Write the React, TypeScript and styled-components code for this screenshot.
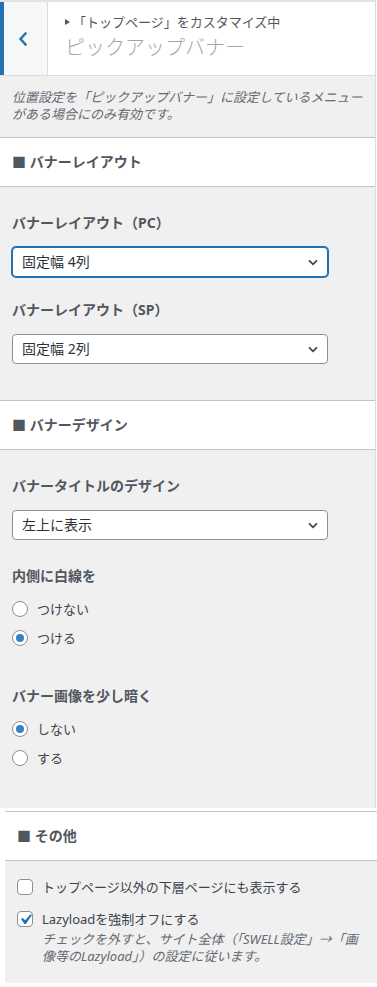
import React from "react";
import styled, { createGlobalStyle } from "styled-components";

const GlobalStyle = createGlobalStyle`
  html, body { margin: 0; padding: 0; background: #fff; }
  body {
    font-family: "Noto Sans", "Noto Sans CJK JP", sans-serif;
    color: #3c434a;
  }
  * { box-sizing: border-box; }
`;

const Page = styled.div`
  width: 377px;
`;

const Panel = styled.div`
  width: 376px;
  border-right: 1px solid #dcdcde;
  background: #f0f0f1;
`;

const Header = styled.div`
  display: flex;
  height: 76px;
  border-top: 2px solid #e2e3e4;
  border-bottom: 1px solid #dcdcde;
  background: #fff;
`;

const BackButton = styled.div`
  width: 48px;
  flex: none;
  display: flex;
  align-items: center;
  justify-content: center;
  padding-right: 5px;
  background: #f6f7f7;
  border-left: 4px solid #2271b1;
  border-right: 1px solid #dcdcde;
`;

const HeaderTitles = styled.div`
  display: flex;
  flex-direction: column;
  padding: 11px 0 0 17px;
`;

const Crumb = styled.div`
  display: flex;
  align-items: center;
  font-size: 13px;
  line-height: 18px;
  color: #50575e;
`;

const CrumbArrow = styled.span`
  width: 0;
  height: 0;
  border-left: 5px solid #50575e;
  border-top: 3px solid transparent;
  border-bottom: 3px solid transparent;
  margin-right: 3px;
`;

const Title = styled.div`
  margin-top: 3px;
  font-size: 20px;
  line-height: 28px;
  font-weight: 300;
  color: #a2a6ab;
`;

const Description = styled.p`
  margin: 0;
  padding: 13px 4px 14px 12px;
  font-size: 13px;
  line-height: 17px;
  font-style: italic;
  color: #646970;
`;

const SectionHead = styled.h3`
  margin: 0;
  height: 50px;
  display: flex;
  align-items: center;
  padding: 0 12px;
  background: #fff;
  border-top: 1px solid #c3c4c7;
  border-bottom: 1px solid #c3c4c7;
  font-size: 14px;
  line-height: 20px;
  font-weight: 700;
  color: #50575e;
`;

const SectionBody = styled.div<{ $pt: number; $pb: number }>`
  padding: ${(p) => p.$pt}px 12px ${(p) => p.$pb}px 12px;
  display: flex;
  flex-direction: column;
`;

const Control = styled.div<{ $mt?: number }>`
  display: flex;
  flex-direction: column;
  margin-top: ${(p) => p.$mt ?? 0}px;
`;

const ControlLabel = styled.div`
  font-size: 14px;
  line-height: 20px;
  font-weight: 700;
  color: #50575e;
`;

const SelectBox = styled.div<{ $focused?: boolean }>`
  margin-top: 14px;
  width: 316px;
  height: 30px;
  display: flex;
  align-items: center;
  justify-content: space-between;
  padding: 0 9px 0 9px;
  background: #fff;
  border: 1px solid ${(p) => (p.$focused ? "#2271b1" : "#8c8f94")};
  box-shadow: ${(p) => (p.$focused ? "0 0 0 1px #2271b1" : "none")};
  border-radius: 4px;
  font-size: 14px;
  line-height: 20px;
  color: #2c3338;
`;

const RadioList = styled.div`
  margin-top: 13px;
  display: flex;
  flex-direction: column;
  gap: 9px;
`;

const OptionRow = styled.label`
  display: flex;
  align-items: center;
  gap: 9px;
  height: 20px;
  font-size: 13px;
  line-height: 20px;
  color: #3c434a;
`;

const RadioCircle = styled.span<{ $checked?: boolean }>`
  width: 16px;
  height: 16px;
  flex: none;
  border-radius: 50%;
  border: 1px solid #8c8f94;
  background: #fff;
  display: flex;
  align-items: center;
  justify-content: center;
  &::after {
    content: "";
    width: 8px;
    height: 8px;
    border-radius: 50%;
    background: ${(p) => (p.$checked ? "#3582c4" : "transparent")};
  }
`;

const OtherPanel = styled.div`
  margin: 3px 0 0 5px;
  width: 372px;
  background: #f0f0f1;
`;

const OtherBody = styled.div`
  padding: 16px 4px 18px 12px;
  display: flex;
  flex-direction: column;
  gap: 12px;
`;

const CheckRow = styled.div`
  display: flex;
  align-items: flex-start;
  gap: 9px;
`;

const CheckBox = styled.span`
  margin-top: 2px;
  width: 16px;
  height: 16px;
  flex: none;
  border: 1px solid #8c8f94;
  border-radius: 4px;
  background: #fff;
  display: flex;
  align-items: center;
  justify-content: center;
  overflow: visible;
`;

const CheckText = styled.div`
  display: flex;
  flex-direction: column;
`;

const CheckLabel = styled.div`
  font-size: 13px;
  line-height: 20px;
  color: #3c434a;
`;

const CheckDesc = styled.div`
  margin-top: 2px;
  font-size: 13px;
  line-height: 17px;
  font-style: italic;
  color: #646970;
`;

const BackChevron = () => (
  <svg width="10" height="14" viewBox="0 0 10 14">
    <polyline
      points="7.5,1.5 2.5,7 7.5,12.5"
      fill="none"
      stroke="#2271b1"
      strokeWidth="2.4"
      strokeLinecap="square"
    />
  </svg>
);

const DownChevron = () => (
  <svg width="10" height="7" viewBox="0 0 10 7">
    <polyline
      points="1,1.3 5,5.3 9,1.3"
      fill="none"
      stroke="#3c434a"
      strokeWidth="1.7"
    />
  </svg>
);

const CheckMark = () => (
  <svg width="21" height="21" viewBox="0 0 20 20" style={{ flex: "none" }}>
    <path
      d="M14.83 4.89l1.34.94-5.81 8.38H9.02L5.78 9.67l1.34-1.25 2.57 2.4z"
      fill="#2271b1"
    />
  </svg>
);

const Select = ({ value, focused }: { value: string; focused?: boolean }) => (
  <SelectBox $focused={focused}>
    <span>{value}</span>
    <DownChevron />
  </SelectBox>
);

const Radio = ({ label, checked }: { label: string; checked?: boolean }) => (
  <OptionRow>
    <RadioCircle $checked={checked} />
    <span>{label}</span>
  </OptionRow>
);

export default function App() {
  return (
    <Page>
      <GlobalStyle />
      <Panel>
        <Header>
          <BackButton>
            <BackChevron />
          </BackButton>
          <HeaderTitles>
            <Crumb>
              <CrumbArrow />
              「トップページ」をカスタマイズ中
            </Crumb>
            <Title>ピックアップバナー</Title>
          </HeaderTitles>
        </Header>
        <Description>
          位置設定を「ピックアップバナー」に設定しているメニュー
          <br />
          がある場合にのみ有効です。
        </Description>

        <SectionHead>■ バナーレイアウト</SectionHead>
        <SectionBody $pt={26} $pb={36}>
          <Control>
            <ControlLabel>バナーレイアウト（PC）</ControlLabel>
            <Select value="固定幅 4列" focused />
          </Control>
          <Control $mt={23}>
            <ControlLabel>バナーレイアウト（SP）</ControlLabel>
            <Select value="固定幅 2列" />
          </Control>
        </SectionBody>

        <SectionHead>■ バナーデザイン</SectionHead>
        <SectionBody $pt={26} $pb={40}>
          <Control>
            <ControlLabel>バナータイトルのデザイン</ControlLabel>
            <Select value="左上に表示" />
          </Control>
          <Control $mt={26}>
            <ControlLabel>内側に白線を</ControlLabel>
            <RadioList>
              <Radio label="つけない" />
              <Radio label="つける" checked />
            </RadioList>
          </Control>
          <Control $mt={38}>
            <ControlLabel>バナー画像を少し暗く</ControlLabel>
            <RadioList>
              <Radio label="しない" checked />
              <Radio label="する" />
            </RadioList>
          </Control>
        </SectionBody>
      </Panel>

      <OtherPanel>
        <SectionHead>■ その他</SectionHead>
        <OtherBody>
          <CheckRow>
            <CheckBox />
            <CheckText>
              <CheckLabel>トップページ以外の下層ページにも表示する</CheckLabel>
            </CheckText>
          </CheckRow>
          <CheckRow>
            <CheckBox>
              <CheckMark />
            </CheckBox>
            <CheckText>
              <CheckLabel>Lazyloadを強制オフにする</CheckLabel>
              <CheckDesc>
                チェックを外すと、サイト全体（「SWELL設定」→「画
                <br />
                像等のLazyload」）の設定に従います。
              </CheckDesc>
            </CheckText>
          </CheckRow>
        </OtherBody>
      </OtherPanel>
    </Page>
  );
}
